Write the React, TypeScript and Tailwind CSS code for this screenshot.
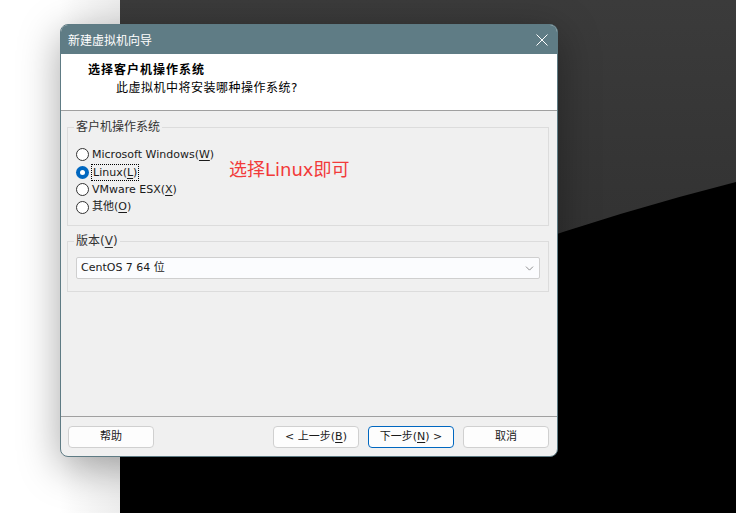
import { ChevronDown } from "lucide-react";

const ui = "font-['DejaVu_Sans','Noto_Sans_CJK_SC',sans-serif]";

function Mn({ k }: { k: string }) {
    return <span className="underline underline-offset-2">{k}</span>;
}

function Radio({ checked, children }: { checked?: boolean; children: React.ReactNode }) {
    return (
        <div className="flex h-[17.6px] items-center gap-[3px]">
            {checked ? (
                <span className="flex h-[13px] w-[13px] items-center justify-center rounded-full bg-[#0067c0]">
                    <span className="h-[5px] w-[5px] rounded-full bg-white" />
                </span>
            ) : (
                <span className="h-[13px] w-[13px] rounded-full border border-[#333] bg-white" />
            )}
            {children}
        </div>
    );
}

function WinButton({ primary, children }: { primary?: boolean; children: React.ReactNode }) {
    return (
        <button
            className={
                primary
                    ? "flex h-[22px] w-[86px] items-center justify-center rounded-[4px] border border-[#0067c0] bg-[#fdfdfd] text-[11px] text-[#1a1a1a]"
                    : "flex h-[22px] w-[86px] items-center justify-center rounded-[4px] border border-[#d0d0d0] bg-[#fdfdfd] text-[11px] text-[#1a1a1a]"
            }
        >
            {children}
        </button>
    );
}

export default function App() {
    return (
        <div className={`relative h-[513px] w-[736px] overflow-hidden bg-white ${ui}`}>
            {/* desktop backdrop */}
            <div className="absolute bottom-0 left-[120px] right-0 top-0 bg-gradient-to-b from-[#3b3b3b] to-[#282828]">
                <svg width="616" height="513" viewBox="0 0 616 513" className="absolute inset-0">
                    <path d="M0 420 Q300 262 616 182 L616 513 L0 513 Z" fill="#000" />
                </svg>
            </div>
            <div className="absolute left-0 top-0 h-full w-[120px] bg-gradient-to-r from-white via-white to-[#ededed]" />

            {/* dialog */}
            <div className="absolute left-[60px] top-[24px] flex h-[433px] w-[498px] flex-col overflow-hidden rounded-[8px] border border-[#5e7b84] bg-[#f0f0f0] shadow-[0_10px_40px_rgba(0,0,0,0.35)]">
                <div className="flex h-[29px] shrink-0 items-center justify-between bg-[#5f7c85] pl-[7px] pr-[9px]">
                    <span className="font-['Noto_Sans_CJK_SC',sans-serif] text-[12px] text-white">新建虚拟机向导</span>
                    <svg width="12" height="12" viewBox="0 0 12 12">
                        <path d="M0.5 0.5 L11.5 11.5 M11.5 0.5 L0.5 11.5" stroke="#fff" strokeWidth="1" />
                    </svg>
                </div>

                <div className="h-[57px] shrink-0 border-b border-[#a0a0a0] bg-white pt-[8px]">
                    <div className="pl-[27px] text-[12px] font-bold leading-[16px] tracking-[1px] text-black">选择客户机操作系统</div>
                    <div className="mt-[2px] pl-[55px] text-[12px] leading-[16px] tracking-[0.5px] text-black">此虚拟机中将安装哪种操作系统?</div>
                </div>

                <div className="flex-1 px-[6px] pr-[8px] pt-[8px] text-[11px] text-[#1a1a1a]">
                    <fieldset className="border border-[#dcdcdc] pb-[9px] pl-[8px]">
                        <legend className="ml-[-2px] px-[2px] text-[12px] leading-[16px] text-[#333]">客户机操作系统</legend>
                        <div className="flex pt-[11px]">
                            <div className="w-[153px]">
                                <Radio>
                                    <span>
                                        Microsoft Windows(<Mn k="W" />)
                                    </span>
                                </Radio>
                                <Radio checked>
                                    <span className="-ml-[1px] border border-dotted border-black px-[1px] leading-[15px]">
                                        Linux(<Mn k="L" />)
                                    </span>
                                </Radio>
                                <Radio>
                                    <span>
                                        VMware ESX(<Mn k="X" />)
                                    </span>
                                </Radio>
                                <Radio>
                                    <span>
                                        其他(<Mn k="O" />)
                                    </span>
                                </Radio>
                            </div>
                            <span className="mt-[12px] text-[18px] leading-[24px] text-[#f23a3a]">选择Linux即可</span>
                        </div>
                    </fieldset>

                    <fieldset className="mt-[7px] border border-[#dcdcdc] px-[8px] pb-[12px]">
                        <legend className="ml-[-2px] px-[2px] text-[12px] leading-[16px] text-[#333]">
                            版本(<Mn k="V" />)
                        </legend>
                        <div className="mt-[8px] flex h-[22px] items-center justify-between rounded-[2px] border border-[#cfcfcf] bg-[#fbfcfe] pl-[4px] pr-[3px]">
                            <span>CentOS 7 64 位</span>
                            <ChevronDown size={13} strokeWidth={1.2} color="#555" />
                        </div>
                    </fieldset>
                </div>

                <div className="flex h-[40px] shrink-0 items-start border-t border-[#a0a0a0] pl-[7px] pr-[8px] pt-[9px]">
                    <WinButton>帮助</WinButton>
                    <div className="ml-auto flex gap-[9px]">
                        <WinButton>
                            &lt; 上一步(<Mn k="B" />)
                        </WinButton>
                        <WinButton primary>
                            下一步(<Mn k="N" />) &gt;
                        </WinButton>
                        <WinButton>取消</WinButton>
                    </div>
                </div>
            </div>
        </div>
    );
}
